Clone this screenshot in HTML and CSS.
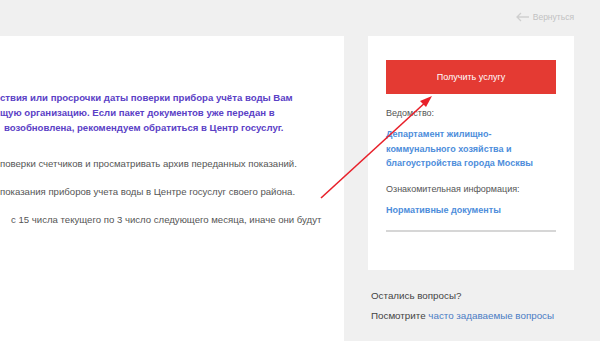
FILE: index.html
```html
<!DOCTYPE html>
<html lang="ru">
<head>
    <meta charset="UTF-8">
    <title>Получить услугу</title>
    <link rel="stylesheet" href="styles.css">
</head>
<body>
    <div class="topbar">
        <a class="back" href="#">
            <svg width="14" height="10" viewBox="0 0 14 10"><path d="M5 1 L1 5 L5 9 M1 5 H13" fill="none" stroke="#cfcfcf" stroke-width="1.3"/></svg>
            Вернуться
        </a>
    </div>
    <div class="page">
        <div class="main">
            <div class="lead">
                <div>ствия или просрочки даты поверки прибора учёта воды Вам</div>
                <div>щую организацию. Если пакет документов уже передан в</div>
                <div class="shift-l">возобновлена, рекомендуем обратиться в Центр госуслуг.</div>
            </div>
            <p class="text">поверки счетчиков и просматривать архив переданных показаний.</p>
            <p class="text">показания приборов учета воды в Центре госуслуг своего района.</p>
            <p class="text shift-s">с 15 числа текущего по 3 число следующего месяца, иначе они будут</p>
        </div>
        <div class="aside">
            <div class="card">
                <button class="btn">Получить услугу</button>
                <div class="label">Ведомство:</div>
                <a class="link" href="#">Департамент жилищно-коммунального хозяйства и благоустройства города Москвы</a>
                <div class="label">Ознакомительная информация:</div>
                <a class="link" href="#">Нормативные документы</a>
                <div class="divider"></div>
            </div>
            <div class="help">
                <div>Остались вопросы?</div>
                <div>Посмотрите <a href="#">часто задаваемые вопросы</a></div>
            </div>
        </div>
    </div>
    <svg class="arrow" width="600" height="341" viewBox="0 0 600 341">
        <line x1="321" y1="198" x2="428" y2="100" stroke="#e8202a" stroke-width="1.6"/>
        <path d="M432 96 L420 101 L426 107 Z" fill="#e8202a"/>
    </svg>
</body>
</html>
```
FILE: styles.css
```css
body {
    margin: 0;
    background: #f0f0f0;
    font-family: "Liberation Sans", Arial, sans-serif;
    font-size: 9.6px;
    color: #555;
    height: 341px;
    overflow: hidden;
    position: relative;
}
a {
    text-decoration: none;
}
.topbar {
    height: 36px;
    display: flex;
    justify-content: flex-end;
    align-items: center;
    padding-right: 26px;
}
.back {
    display: flex;
    align-items: center;
    gap: 3px;
    color: #c2c2c2;
    font-size: 8.5px;
    margin-top: -2px;
}
.page {
    display: flex;
    gap: 24px;
}
.main {
    width: 344px;
    height: 310px;
    background: #fff;
    padding-top: 54px;
    box-sizing: border-box;
    overflow: hidden;
}
.lead {
    color: #5b41c6;
    font-weight: bold;
    font-size: 9.6px;
    line-height: 15px;
    margin-bottom: 21px;
}
.shift-l {
    padding-left: 4px;
}
.text {
    margin: 0 0 13px;
    line-height: 15px;
    white-space: nowrap;
}
.shift-s {
    padding-left: 11px;
}
.aside {
    width: 206px;
}
.card {
    background: #fff;
    height: 234px;
    box-sizing: border-box;
    padding: 24px 18px 0;
    font-size: 9px;
}
.btn {
    width: 100%;
    height: 34px;
    border: none;
    background: #e43a33;
    color: #fff;
    font-family: inherit;
    font-size: 9px;
    margin-bottom: 12px;
}
.label {
    line-height: 15px;
    margin-bottom: 6px;
}
.link {
    display: block;
    color: #4d8ddb;
    font-weight: bold;
    line-height: 14.5px;
    margin-bottom: 11px;
}
.link + .label + .link {
    margin-top: 2px;
}
.divider {
    height: 2px;
    background: #d6d6d6;
    margin-top: 13px;
}
.help {
    padding: 16px 0 0 3px;
    line-height: 20px;
    font-size: 9.8px;
    color: #444;
}
.help a {
    color: #4a7cc4;
}
.arrow {
    position: absolute;
    left: 0;
    top: 0;
    pointer-events: none;
}
```
